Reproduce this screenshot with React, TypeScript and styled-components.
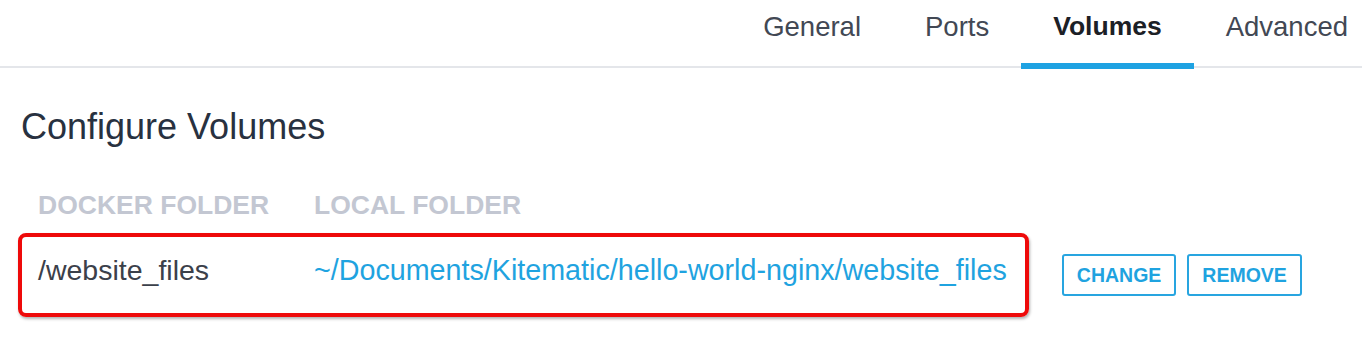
import { createGlobalStyle, styled } from 'styled-components';

const GlobalStyle = createGlobalStyle`
  html, body {
    margin: 0;
    padding: 0;
    background: #ffffff;
    overflow: hidden;
  }

  body {
    font-family: "Liberation Sans", Arial, sans-serif;
  }
`;

const Page = styled.div`
  width: 1362px;
  height: 356px;
  background: #ffffff;
`;

const TabBar = styled.nav`
  display: flex;
  justify-content: flex-end;
  height: 66px;
  border-bottom: 2px solid #e4e6ea;
`;

const Tab = styled.div<{ $active?: boolean; $last?: boolean }>`
  position: relative;
  padding: 13px ${({ $last }) => ($last ? '14px' : '32px')} 0 32px;
  font-size: ${({ $active }) => ($active ? '26.5px' : '27.5px')};
  line-height: 27px;
  font-weight: ${({ $active }) => ($active ? 700 : 400)};
  color: ${({ $active }) => ($active ? '#1c2026' : '#424854')};

  &::after {
    content: '';
    display: ${({ $active }) => ($active ? 'block' : 'none')};
    position: absolute;
    left: 0;
    right: 0;
    bottom: -3px;
    height: 6px;
    background: #1ea2e2;
  }
`;

const Section = styled.section`
  padding-left: 18px;
`;

const Heading = styled.h1`
  margin: 38px 0 0 3px;
  font-size: 36px;
  line-height: 42px;
  font-weight: 400;
  color: #283140;
`;

const HeaderRow = styled.div`
  display: flex;
  margin-top: 42px;
  padding-left: 20px;
`;

const HeaderCell = styled.div<{ $width?: number }>`
  width: ${({ $width }) => ($width ? `${$width}px` : 'auto')};
  font-size: 26.5px;
  line-height: 30px;
  font-weight: 700;
  color: #c3c7d2;
`;

const VolumeRow = styled.div`
  display: flex;
  align-items: center;
  margin-top: 13px;
`;

const Highlight = styled.div`
  display: flex;
  padding: 16px 18px 26px 16px;
  border: 4px solid #ee0a0a;
  border-radius: 8px;
  box-shadow: 1px 2px 3px rgba(0, 0, 0, 0.3);
`;

const DockerPath = styled.div`
  width: 276px;
  font-size: 28.5px;
  line-height: 34px;
  color: #3b404a;
`;

const LocalPath = styled.a`
  font-size: 28.7px;
  line-height: 34px;
  color: #1fa3e0;
  text-decoration: none;
`;

const Actions = styled.div`
  display: flex;
  gap: 11px;
  margin-left: 33px;
`;

const ActionButton = styled.button`
  height: 42px;
  padding: 0 13px;
  border: 2px solid #28a5e0;
  border-radius: 3px;
  background: #ffffff;
  font-family: "Liberation Sans", Arial, sans-serif;
  font-size: 19.5px;
  font-weight: 700;
  color: #1fa3e0;
`;

const tabs = ['General', 'Ports', 'Volumes', 'Advanced'];

const App = () => {
  return (
    <Page>
      <GlobalStyle />
      <TabBar>
        {tabs.map((tab, i) => (
          <Tab key={tab} $active={tab === 'Volumes'} $last={i === tabs.length - 1}>
            {tab}
          </Tab>
        ))}
      </TabBar>
      <Section>
        <Heading>Configure Volumes</Heading>
        <HeaderRow>
          <HeaderCell $width={276}>DOCKER FOLDER</HeaderCell>
          <HeaderCell>LOCAL FOLDER</HeaderCell>
        </HeaderRow>
        <VolumeRow>
          <Highlight>
            <DockerPath>/website_files</DockerPath>
            <LocalPath>~/Documents/Kitematic/hello-world-nginx/website_files</LocalPath>
          </Highlight>
          <Actions>
            <ActionButton>CHANGE</ActionButton>
            <ActionButton>REMOVE</ActionButton>
          </Actions>
        </VolumeRow>
      </Section>
    </Page>
  );
};

export default App;
